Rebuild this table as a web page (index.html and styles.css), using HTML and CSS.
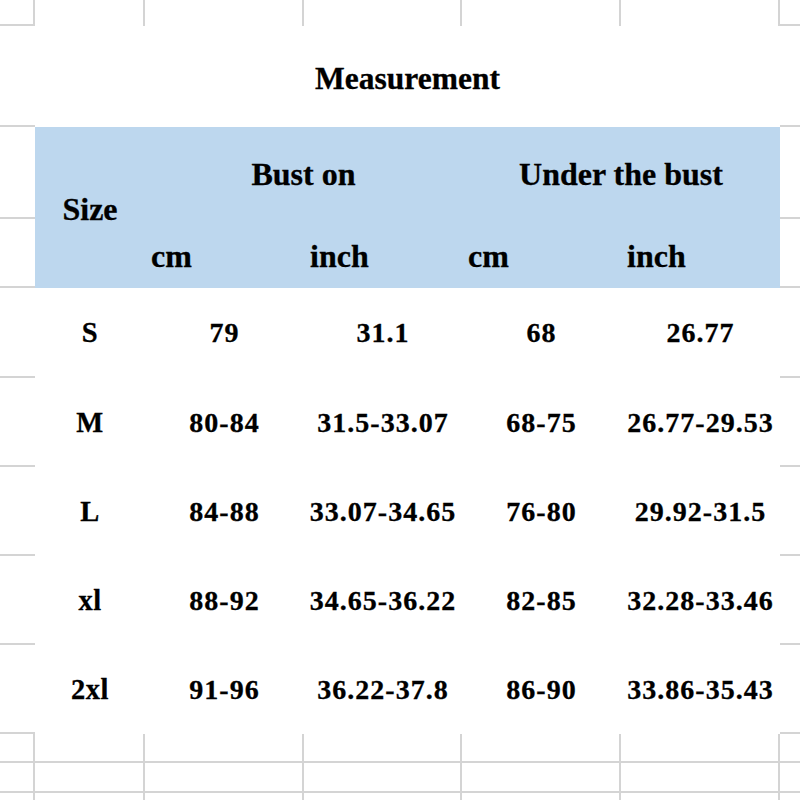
FILE: index.html
```html
<!DOCTYPE html>
<html>
<head>
<meta charset="utf-8">
<link rel="stylesheet" href="styles.css">
</head>
<body>
<div class="sheet">
  <div class="strip strip-top">
    <div class="cell edge"></div>
    <div class="cell"></div>
    <div class="cell"></div>
    <div class="cell"></div>
    <div class="cell"></div>
    <div class="cell"></div>
    <div class="cell edge last"></div>
  </div>
  <div class="middle">
    <div class="margin margin-left">
      <div class="m h101"></div>
      <div class="m h92"></div>
      <div class="m h69"></div>
      <div class="m h90"></div>
      <div class="m h89"></div>
      <div class="m h89"></div>
      <div class="m h89"></div>
      <div class="m h89"></div>
    </div>
    <div class="table">
      <div class="title">Measurement</div>
      <div class="hd size">Size</div>
      <div class="hd group">Bust on</div>
      <div class="hd group">Under the bust</div>
      <div class="hd unit">cm</div>
      <div class="hd unit">inch</div>
      <div class="hd unit">cm</div>
      <div class="hd unit">inch</div>

      <div class="td sz">S</div><div class="td">79</div><div class="td">31.1</div><div class="td">68</div><div class="td">26.77</div>
      <div class="td sz">M</div><div class="td">80-84</div><div class="td">31.5-33.07</div><div class="td">68-75</div><div class="td">26.77-29.53</div>
      <div class="td sz">L</div><div class="td">84-88</div><div class="td">33.07-34.65</div><div class="td">76-80</div><div class="td">29.92-31.5</div>
      <div class="td sz">xl</div><div class="td">88-92</div><div class="td">34.65-36.22</div><div class="td">82-85</div><div class="td">32.28-33.46</div>
      <div class="td sz">2xl</div><div class="td">91-96</div><div class="td">36.22-37.8</div><div class="td">86-90</div><div class="td">33.86-35.43</div>
    </div>
    <div class="margin margin-right">
      <div class="m h101"></div>
      <div class="m h92"></div>
      <div class="m h69"></div>
      <div class="m h90"></div>
      <div class="m h89"></div>
      <div class="m h89"></div>
      <div class="m h89"></div>
      <div class="m h89"></div>
    </div>
  </div>
  <div class="strip strip-bottom">
    <div class="cell"></div><div class="cell"></div><div class="cell"></div><div class="cell"></div><div class="cell"></div><div class="cell"></div><div class="cell last"></div>
    <div class="cell"></div><div class="cell"></div><div class="cell"></div><div class="cell"></div><div class="cell"></div><div class="cell"></div><div class="cell last"></div>
    <div class="cell open"></div><div class="cell open"></div><div class="cell open"></div><div class="cell open"></div><div class="cell open"></div><div class="cell open"></div><div class="cell open last"></div>
  </div>
</div>
</body>
</html>
```
FILE: styles.css
```css
* { box-sizing: border-box; }
html, body { margin: 0; padding: 0; background: #ffffff; }

.sheet {
  width: 800px;
  height: 800px;
  overflow: hidden;
  display: flex;
  flex-direction: column;
  font-family: "Liberation Serif", "Times New Roman", serif;
  font-weight: bold;
  color: #000000;
  -webkit-text-stroke: 0.3px #000000;
}

.strip {
  display: grid;
  grid-template-columns: 35px 110px 159px 158px 159px 159px 20px;
}

.strip-top { height: 26px; grid-template-rows: 26px; }
.strip-top .cell { border-right: 2px solid #d4d4d4; }
.strip-top .cell.edge { border-bottom: 2px solid #d4d4d4; }
.strip .cell.last { border-right: none; }

.strip-bottom { grid-template-rows: 29px 30px 7px; height: 66px; }
.strip-bottom .cell { border-right: 2px solid #d4d4d4; border-bottom: 2px solid #d4d4d4; }
.strip-bottom .cell.open { border-bottom: none; }
.strip-bottom .cell.last { border-right: none; }

.middle { display: flex; height: 708px; }

.margin { display: flex; flex-direction: column; }
.margin-left { width: 35px; }
.margin-right { width: 20px; }
.margin .m { border-bottom: 2px solid #d4d4d4; }
.h101 { height: 101px; }
.h92 { height: 92px; }
.h69 { height: 69px; }
.h90 { height: 90px; }
.h89 { height: 89px; }

.table {
  width: 745px;
  display: grid;
  grid-template-columns: 110px 159px 158px 159px 159px;
  grid-template-rows: 101px 92px 69px 90px 89px 89px 89px 89px;
  background: #ffffff;
}

.title {
  grid-column: 1 / -1;
  display: flex;
  align-items: center;
  justify-content: center;
  font-size: 31.5px;
  padding-top: 4px;
}

.hd {
  background: #bdd7ee;
  display: flex;
  align-items: center;
  font-size: 32px;
}
.hd.size {
  grid-row: span 2;
  justify-content: center;
  padding-top: 4px;
}
.hd.group {
  grid-column: span 2;
  justify-content: center;
  padding-top: 2px;
}
.hd.unit {
  justify-content: flex-start;
  padding-left: 6px;
  padding-top: 5px;
}

.td {
  display: flex;
  align-items: center;
  justify-content: center;
  font-size: 28px;
  letter-spacing: 1px;
}
.td.sz { font-size: 28.5px; letter-spacing: 0.5px; }
```
